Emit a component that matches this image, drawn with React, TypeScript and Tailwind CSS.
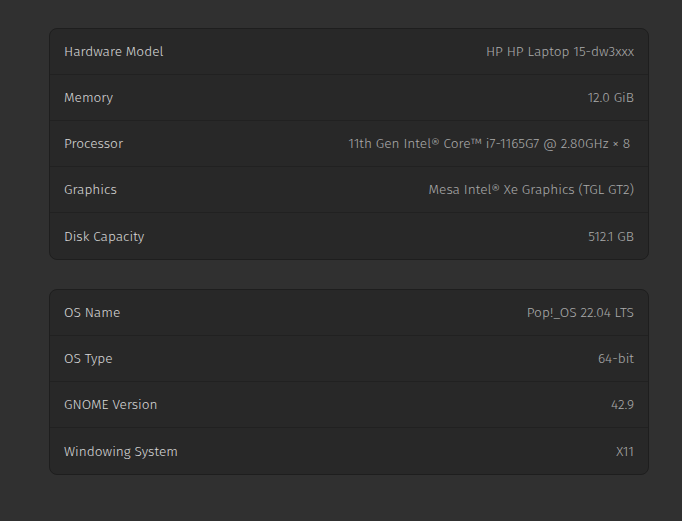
import React from 'react';

type Row = { label: string; value: string };

const hardware: Row[] = [
    { label: 'Hardware Model', value: 'HP HP Laptop 15-dw3xxx' },
    { label: 'Memory', value: '12.0 GiB' },
    { label: 'Processor', value: '11th Gen Intel® Core™ i7-1165G7 @ 2.80GHz × 8\u00a0' },
    { label: 'Graphics', value: 'Mesa Intel® Xe Graphics (TGL GT2)' },
    { label: 'Disk Capacity', value: '512.1 GB' },
];

const software: Row[] = [
    { label: 'OS Name', value: 'Pop!_OS 22.04 LTS' },
    { label: 'OS Type', value: '64-bit' },
    { label: 'GNOME Version', value: '42.9' },
    { label: 'Windowing System', value: 'X11' },
];

const InfoCard: React.FC<{ rows: Row[] }> = ({ rows }) => (
    <div className="rounded-lg border border-[#1e1e1e] bg-[#282828] divide-y divide-[#212121]">
        {rows.map((row) => (
            <div key={row.label} className="flex h-[46px] items-center justify-between px-[14px] pt-[2px]">
                <span className="text-[#d8d8d8]">{row.label}</span>
                <span className="text-[#ababab]">{row.value}</span>
            </div>
        ))}
    </div>
);

export default function App() {
    return (
        <div
            className="min-h-[521px] w-full bg-[#303030] text-[13.7px] font-light pt-[28px] pl-[49px] pb-[40px]"
            style={{ fontFamily: '"Fira Sans", Roboto, "Noto Sans", sans-serif' }}
        >
            <div className="flex w-[600px] flex-col gap-[29px]">
                <InfoCard rows={hardware} />
                <InfoCard rows={software} />
            </div>
        </div>
    );
}
